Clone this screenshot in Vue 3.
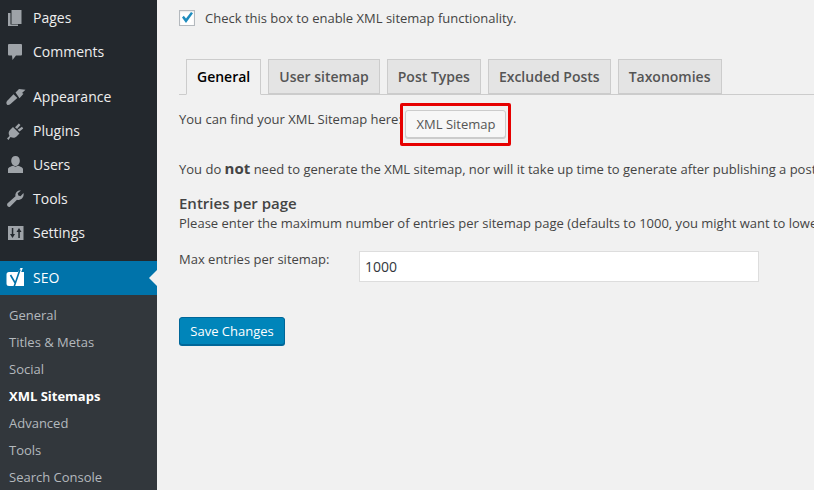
<script setup>
const topItems = [
  [{ name: 'Pages', icon: 'pages' }, { name: 'Comments', icon: 'comments' }],
  [{ name: 'Appearance', icon: 'appearance' }, { name: 'Plugins', icon: 'plugins' }, { name: 'Users', icon: 'users' }, { name: 'Tools', icon: 'tools' }, { name: 'Settings', icon: 'settings' }]
]
const sub = ['General', 'Titles & Metas', 'Social', 'XML Sitemaps', 'Advanced', 'Tools', 'Search Console']
const tabs = ['General', 'User sitemap', 'Post Types', 'Excluded Posts', 'Taxonomies']
const icons = {
  pages: 'M7.500 4h10v14h-10zM4 7h2.500v11.500H14V20H4z',
  comments: 'M5 4h12a1 1 0 0 1 1 1v9.500a1 1 0 0 1-1 1h-5L8.500 20l-.5-4.500H5a1 1 0 0 1-1-1V5a1 1 0 0 1 1-1z',
  appearance: 'M11.500 7.500L15 4l6.500.8-3.500 3.200 1.500.8L15.500 13.300zM9.500 9.300l3.800 3.800-6.800 6c-1.800 1.200-3.400 1.300-4-.3-.5-1.400.3-2.700 1.500-3.800z',
  plugins: 'M3 19.500L5.500 17c-1.300-2.300-1-4.500.5-6L9 8l6.500 6.500-3 3c-1.500 1.500-3.800 1.800-6 .5L4.500 21zM11 8.200L14.800 4.500l1.700 1.500-3.400 4zM13.600 10.700L18 7.800l1.200 1.700-3.700 3z',
  users: 'M11.500 3c2.600 0 4.300 2 4.300 4.700S14 13 11.500 13 7.200 10.400 7.200 7.700 8.900 3 11.500 3zM4 20v-3.700c0-1.800 3-2.800 5-3.500l2.500 1 2.500-1c2 .7 5 1.700 5 3.500V20z',
  tools: 'M19.500 6l-3 3.200-2.200-.7-.6-2.200L16.900 3.600C13.500 3 10.800 6 11.500 9.300L3.600 16.300C2.300 17.800 3.700 20.800 6 19.800L13 12.700C17 13.800 20.500 10 19.500 6z',
  settings: 'M4 5h15.500v14H4zM7.800 7v6H6l2.500 4 2.500-4H9.300V7zM14.300 17v-6h-1.800l2.500-4 2.500 4h-1.700v6z'
}
</script>

<template>
  <div class="page">
    <aside class="sidebar">
      <div v-for="(group, g) in topItems" :key="g" class="group">
        <div v-for="item in group" :key="item.name" class="row">
          <svg class="icon" viewBox="0 0 26 24" width="26" height="24"><path :d="icons[item.icon]" fill-rule="evenodd" /></svg>
          <span>{{ item.name }}</span>
        </div>
      </div>
      <div class="row active">
        <svg class="icon yoast" viewBox="0 0 26 24" width="26" height="24">
          <path d="M5 6h15v14H5a2.500 2.500 0 0 1-2.500-2.500v-9A2.500 2.500 0 0 1 5 6z" fill="#fff" />
          <path d="M14 6l2.500-4h2.300L17 6.500z" fill="#fff" />
          <path d="M6.500 9l4.700 8M16 3.500L10 21" fill="none" stroke="#0073aa" stroke-width="1.600" />
        </svg>
        <span>SEO</span>
        <i class="arrow"></i>
      </div>
      <nav class="submenu">
        <a v-for="s in sub" :key="s" :class="{ current: s === 'XML Sitemaps' }">{{ s }}</a>
      </nav>
    </aside>
    <main class="main">
      <div class="enable">
        <span class="check">
          <svg viewBox="0 0 16 16" width="16" height="16"><path d="M3 7.500L4.800 5.800 7 8.500 12 2 14 3.200 7 13z" fill="#1e8cbe" /></svg>
        </span>
        <span>Check this box to enable XML sitemap functionality.</span>
      </div>
      <div class="tabs">
        <div v-for="(t, i) in tabs" :key="t" class="tab" :class="{ on: i === 0 }">{{ t }}</div>
      </div>
      <div class="find">
        <span>You can find your XML Sitemap here:</span>
        <span class="redbox"><button class="btn">XML Sitemap</button></span>
      </div>
      <p class="para nowrap">You do <strong>not</strong> need to generate the XML sitemap, nor will it take up time to generate after publishing a post.</p>
      <h2 class="heading">Entries per page</h2>
      <p class="para nowrap desc">Please enter the maximum number of entries per sitemap page (defaults to 1000, you might want to lower this to prevent memory issues).</p>
      <div class="field">
        <label>Max entries per sitemap:</label>
        <div class="input">1000</div>
      </div>
      <button class="save">Save Changes</button>
    </main>
  </div>
</template>

<style scoped>
.page {
  display: flex;
  width: 814px;
  height: 490px;
  overflow: hidden;
  background: #f1f1f1;
  font-family: "Open Sans", sans-serif;
  font-size: 13px;
  color: #444;
}
.sidebar {
  width: 157px;
  flex: none;
  background: #23282d;
  padding-top: 1px;
  box-sizing: border-box;
  color: #eee;
}
.group { margin-bottom: 11px; }
.row {
  position: relative;
  display: flex;
  align-items: center;
  height: 34px;
  font-size: 14px;
  color: #eee;
}
.row span { padding-bottom: 2px; }
.icon {
  margin-left: 4px;
  margin-right: 3px;
  flex: none;
  fill: #9ea3a8;
}
.active {
  background: #0073aa;
  color: #fff;
}
.arrow {
  position: absolute;
  right: 0;
  top: 9px;
  border: 8px solid transparent;
  border-right-color: #f1f1f1;
  border-left-width: 0;
}
.submenu {
  background: #32373c;
  padding-top: 7px;
  height: 195px;
  display: flex;
  flex-direction: column;
}
.submenu a {
  flex: none;
  height: 27px;
  line-height: 27px;
  padding-left: 9px;
  color: #b4b9be;
}
.submenu a.current {
  color: #fff;
  font-weight: 700;
}
.main {
  flex: 1;
  min-width: 0;
  padding-left: 22px;
  overflow: hidden;
}
.enable {
  display: flex;
  align-items: center;
  gap: 10px;
  height: 18px;
  margin-top: 9px;
}
.check {
  width: 16px;
  height: 16px;
  box-sizing: border-box;
  border: 1px solid #b4b9be;
  background: #fff;
  display: flex;
  align-items: center;
  justify-content: center;
  box-shadow: inset 0 1px 2px rgba(0, 0, 0, .1);
  flex: none;
}
.check svg { flex: none; }
.tabs {
  display: flex;
  gap: 7px;
  margin-top: 32px;
  padding-left: 7px;
  border-bottom: 1px solid #ccc;
  height: 35px;
}
.tab {
  height: 35px;
  box-sizing: border-box;
  padding: 0 10px;
  line-height: 34px;
  font-size: 14px;
  font-weight: 600;
  color: #555;
  background: #e4e4e4;
  border: 1px solid #ccc;
}
.tab.on {
  height: 36px;
  background: #f1f1f1;
  border-bottom-color: #f1f1f1;
  color: #000;
}
.find {
  display: flex;
  align-items: flex-start;
  margin-top: 8px;
  height: 44px;
  line-height: 24px;
  white-space: nowrap;
}
.find > span:first-child { width: 221px; flex: none; margin-top: 4px; }
.redbox {
  border: 3px solid #e60000;
  border-radius: 2px;
  padding: 4px 2px 3px 2px;
  display: block;
  height: 43px;
  box-sizing: border-box;
}
.btn {
  display: block;
  height: 28px;
  width: 101px;
  padding: 0 0 0 1px;
  border: 1px solid #ccc;
  border-radius: 3px;
  background: #f7f7f7;
  box-shadow: 0 1px 0 #ccc;
  font-family: inherit;
  font-size: 13px;
  color: #555;
}
.para {
  margin: 0;
  line-height: 20px;
  white-space: nowrap;
}
.find + .para { margin-top: 11px; }
.para strong { font-size: 15px; font-weight: 700; }
.heading {
  margin: 14px 0 0;
  font-size: 15px;
  font-weight: 600;
  line-height: 20px;
  color: #444;
}
.desc { line-height: 18px; margin-top: 1px; }
.field {
  display: flex;
  margin-top: 19px;
  height: 32px;
}
.field label { width: 180px; flex: none; line-height: 16px; }
.input {
  width: 400px;
  height: 31px;
  box-sizing: border-box;
  border: 1px solid #ddd;
  background: #fff;
  padding-left: 5px;
  font-size: 14px;
  line-height: 30px;
  color: #32373c;
}
.save {
  display: block;
  margin-top: 34px;
  width: 106px;
  height: 28px;
  padding: 0;
  border: 1px solid #006799;
  border-radius: 3px;
  background: #0085ba;
  box-shadow: 0 1px 0 #006799;
  font-family: inherit;
  font-size: 13px;
  color: #fff;
}
</style>
